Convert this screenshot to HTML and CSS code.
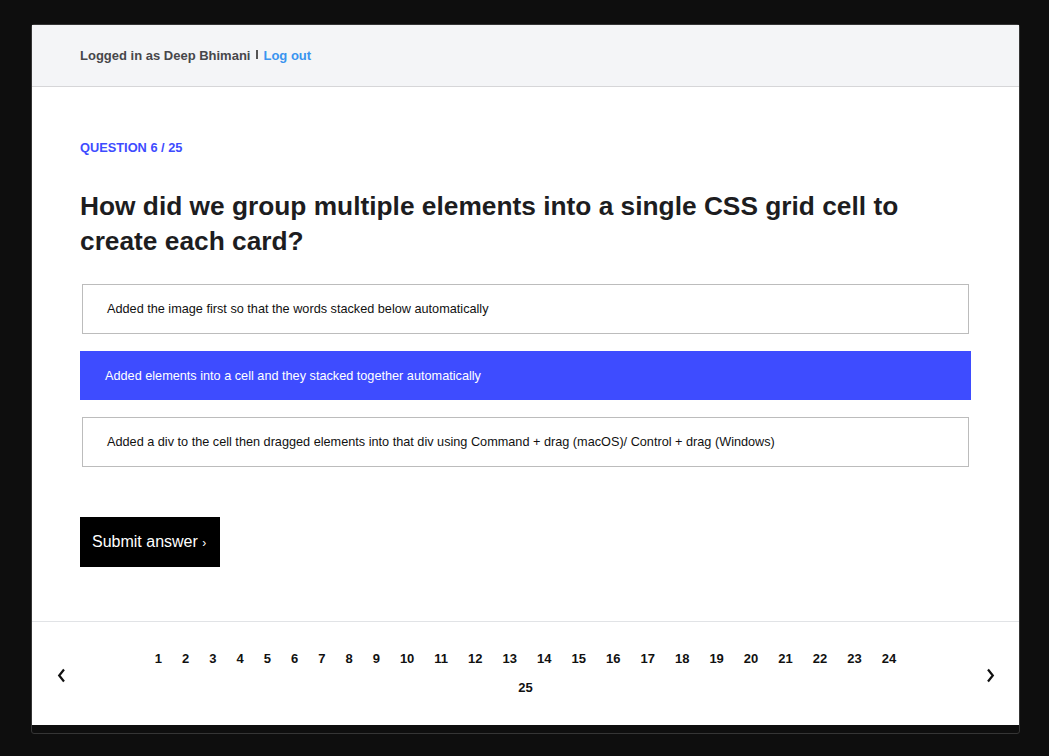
FILE: index.html
```html
<!DOCTYPE html>
<html lang="en">
<head>
<meta charset="utf-8">
<title>Quiz</title>
<link rel="stylesheet" href="styles.css">
</head>
<body>
<div class="frame">
  <div class="page">
    <header class="topbar">
      <span class="user">Logged in as Deep Bhimani</span>
      <span class="sep"></span>
      <a class="logout" href="#">Log out</a>
    </header>
    <main class="main">
      <div class="label">QUESTION 6 / 25</div>
      <h1 class="question">How did we group multiple elements into a single CSS grid cell to create each card?</h1>
      <div class="options">
        <div class="option">Added the image first so that the words stacked below automatically</div>
        <div class="option selected">Added elements into a cell and they stacked together automatically</div>
        <div class="option">Added a div to the cell then dragged elements into that div using Command + drag (macOS)/ Control + drag (Windows)</div>
      </div>
      <button class="submit">Submit answer <span class="chev">›</span></button>
    </main>
    <footer class="pager">
      <span class="arrow"><svg width="9" height="15" viewBox="0 0 9 15"><polyline points="7,1.5 2.2,7.5 7,13.5" fill="none" stroke="#111" stroke-width="2.2"/></svg></span>
      <div class="pages">
        <span class="pg">1</span><span class="pg">2</span><span class="pg">3</span><span class="pg">4</span><span class="pg">5</span><span class="pg">6</span><span class="pg">7</span><span class="pg">8</span><span class="pg">9</span><span class="pg">10</span><span class="pg">11</span><span class="pg">12</span><span class="pg">13</span><span class="pg">14</span><span class="pg">15</span><span class="pg">16</span><span class="pg">17</span><span class="pg">18</span><span class="pg">19</span><span class="pg">20</span><span class="pg">21</span><span class="pg">22</span><span class="pg">23</span><span class="pg">24</span><span class="pg">25</span>
      </div>
      <span class="arrow"><svg width="9" height="15" viewBox="0 0 9 15"><polyline points="2,1.5 6.8,7.5 2,13.5" fill="none" stroke="#111" stroke-width="2.2"/></svg></span>
    </footer>
  </div>
</div>
</body>
</html>
```
FILE: styles.css
```css
* { box-sizing: border-box; }
html, body { margin: 0; padding: 0; }
body {
  background: #0e0e0e;
  font-family: "Liberation Sans", Arial, Helvetica, sans-serif;
  padding: 24px 0 0 31px;
  height: 756px;
  overflow: hidden;
}
.frame {
  width: 989px;
  height: 710px;
  border: 1px solid #353535;
  border-radius: 3px;
  background: #0e0e0e;
}
.page {
  background: #fff;
  height: 700px;
  display: flex;
  flex-direction: column;
}
.topbar {
  height: 62px;
  background: #f4f5f7;
  border-bottom: 1px solid #d6d6d8;
  display: flex;
  align-items: center;
  padding: 0 48px;
  font-size: 13px;
  font-weight: 700;
}
.user { color: #47474a; }
.sep {
  display: inline-block;
  width: 2px;
  height: 9px;
  background: #555;
  margin: 0 5px 3px 6px;
}
.logout { color: #3a94ef; text-decoration: none; }
.main {
  padding: 54px 48px 0;
  height: 534px;
}
.label {
  color: #3e4cff;
  font-size: 12.8px;
  line-height: 14px;
  font-weight: 700;
}
.question {
  margin: 34px 0 0;
  font-size: 26.3px;
  line-height: 35px;
  font-weight: 700;
  color: #1d1d1f;
}
.options {
  margin-top: 25px;
  display: flex;
  flex-direction: column;
  gap: 17px;
}
.option {
  height: 50px;
  margin: 0 2px;
  border: 1px solid #bcbcbc;
  padding: 0 24px;
  display: flex;
  align-items: center;
  font-size: 12.7px;
  color: #111;
}
.option.selected {
  height: 49px;
  margin: 0;
  border: 0;
  padding: 0 25px;
  background: #3e4cff;
  color: #fff;
}
.submit {
  margin-top: 50px;
  width: 140px;
  height: 50px;
  background: #000;
  color: #fff;
  border: 0;
  font-family: inherit;
  font-size: 16px;
  text-align: left;
  padding: 0 12px 1px;
}
.chev { font-size: 12px; }
.pager {
  border-top: 1px solid #e1e3e6;
  flex: 1;
  display: flex;
  align-items: center;
}
.arrow {
  width: 58px;
  display: flex;
  justify-content: center;
  padding-top: 4px;
}
.pages {
  flex: 1;
  margin: 0 42px;
  display: flex;
  flex-wrap: wrap;
  justify-content: center;
  padding-bottom: 2px;
}
.pg {
  font-size: 13px;
  font-weight: 700;
  line-height: 29px;
  padding: 0 10px;
  color: #111;
}
```
